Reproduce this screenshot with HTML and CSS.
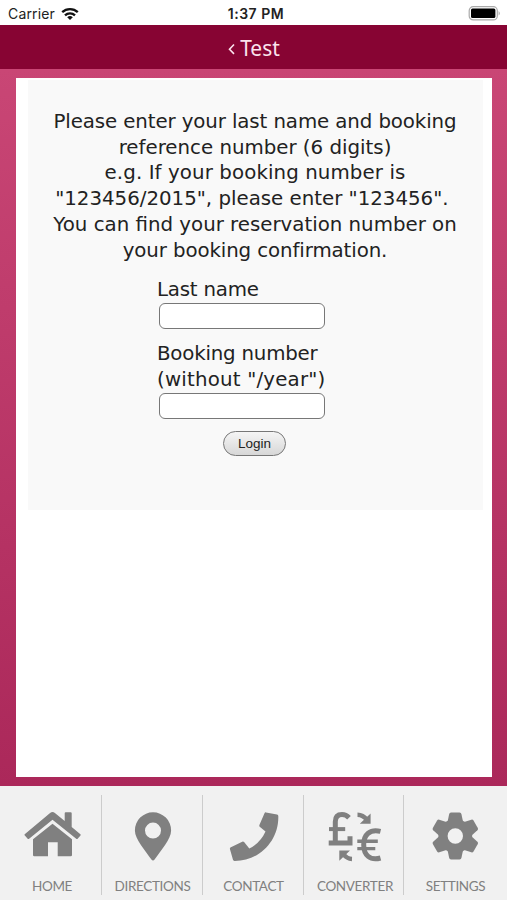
FILE: index.html
```html
<!DOCTYPE html>
<html lang="en">
<head>
<meta charset="utf-8">
<title>Test</title>
<link rel="stylesheet" href="styles.css">
</head>
<body>
<div class="status">
  <div class="carrier"><span>Carrier</span>
    <svg width="18" height="14" viewBox="0 0 18 14" fill="none" stroke="#111" stroke-width="2.3"><path d="M1.2 5.2a11.2 11.2 0 0 1 15.6 0M4 8.3a7.2 7.2 0 0 1 10 0"/><path d="M9 13L6.2 10.3a4 4 0 0 1 5.6 0z" fill="#111" stroke="none"/></svg>
  </div>
  <div class="time">1:37 PM</div>
  <svg class="battery" width="33" height="15" viewBox="0 0 33 15"><rect x="1.200" y=".7" width="28.100" height="13.2" rx="4" fill="#fff" stroke="#aaa" stroke-width="1.2"/><rect x="3" y="2.5" width="24.400" height="9.6" rx="1.500" fill="#000"/><path d="M30.7 5q2 2.3 0 4.6z" fill="#999"/></svg>
</div>
<header class="header">
  <svg width="8" height="12" viewBox="0 0 8 12" fill="none" stroke="#fbe3ed" stroke-width="1.6"><path d="M7 1.500L2.500 6.200l4.500 4.700"/></svg>
  <h1>Test</h1>
</header>
<main class="main">
  <div class="card">
    <form class="panel">
      <p class="intro"><span class="tight">Please enter your last name and booking</span><br>reference number (6 digits)<br><span class="loose">e.g. If your booking number is</span><br>"123456/2015", please enter "123456".&nbsp;<br>You can find your reservation number on<br><span class="tight">your booking confirmation.</span></p>
      <div class="fields">
        <label class="tighter" for="last">Last name</label>
        <input id="last" type="text">
        <label class="second" for="booking"><span class="tighter">Booking number</span><br><span class="wide">(without "/year")</span></label>
        <input id="booking" type="text">
      </div>
      <button type="button">Login</button>
    </form>
  </div>
</main>
<nav class="tabs">
  <a class="tab"><svg viewBox="22 806 60 60"><path d="M33 839.200L52.500 823.700 72 839.200V855q0 1.300-1.300 1.300H57.700V842.300H48V856.300H34.300Q33 856.300 33 855z"/><path d="M24.700 834.300L50.100 813q2.400-1.900 4.800 0L64.700 821V813.300q0-1 1-1h5q1 0 1 1V827L80.400 834.300q.6.500.1 1.100L77.400 839 76.500 839 52.500 819.700 28.800 839 27.900 839 24.600 835.300q-.4-.6.1-1z"/></svg><span>HOME</span></a>
  <a class="tab directions"><svg viewBox="123 806 60 60"><path fill-rule="evenodd" d="M153 812.300a18 18 0 0 1 18.100 18.100c0 9-10.600 20-16.500 29.200q-1.600 2-3.200 0c-5.900-9.200-16.500-20.200-16.500-29.200A18 18 0 0 1 153 812.300zm0 10.300a8 8 0 1 0 0 16 8 8 0 0 0 0-16z"/></svg><span>DIRECTIONS</span></a>
  <a class="tab contact"><svg viewBox="223 806 60 60"><path d="M264.500 813.200q.5-1 1.500-.8L277 814.500q1.300.3 1.300 1.600C279 840 260 861 234.500 860.900q-1.300 0-1.600-1.300L229.900 849q-.2-1.200 1-1.700l11.300-5.600q1.100-.5 1.900.4l5.200 6.500q11-5.500 16.200-17l-5.500-4.500q-1-.8-.6-2z"/></svg><span>CONTACT</span></a>
  <a class="tab converter"><svg viewBox="325 806 60 60"><g fill="none" stroke="#808080" stroke-width="5"><path d="M349 817.800q-3-3.200-7-3.200-6.700 0-6.700 7.200v20"/><path d="M329 829.100h16.200" stroke-width="4"/><path d="M328.700 843h21.300v-6.800"/><path d="M380.500 831.400c-10.500-2.500-16.800 3-16.800 13.300s6.300 16.300 16.800 13.300"/><path d="M357.300 841.200h20.500M357.300 848.600h18" stroke-width="3.400"/><path d="M357.500 814.700q5.500 0 9.700 5.500M352 859q-5-.2-9-5.100" stroke-width="4.400"/></g><path d="M370.600 813.500V823.800H359.800zM339.300 860.800V850.500H350z"/></svg><span>CONVERTER</span></a>
  <a class="tab settings"><svg viewBox="425 806 60 60"><defs><path id="tooth" d="M447.300 823L449.200 814q.3-1.400 1.800-1.500h8.600q1.500.1 1.800 1.500L463.300 823z"/></defs><use href="#tooth"/><use href="#tooth" transform="rotate(60 455.300 836)"/><use href="#tooth" transform="rotate(120 455.300 836)"/><use href="#tooth" transform="rotate(180 455.300 836)"/><use href="#tooth" transform="rotate(240 455.300 836)"/><use href="#tooth" transform="rotate(300 455.300 836)"/><circle cx="455.300" cy="836" r="12.300" fill="none" stroke="#808080" stroke-width="9.200"/></svg><span>SETTINGS</span></a>
</nav>
</body>
</html>
```
FILE: styles.css
```css
* { box-sizing: border-box; }
body {
  margin: 0;
  width: 507px;
  height: 900px;
  display: flex;
  flex-direction: column;
  overflow: hidden;
  background: #fff;
  font-family: "DejaVu Sans", Verdana, sans-serif;
}
.status {
  height: 25px;
  flex: none;
  display: grid;
  grid-template-columns: 1fr auto 1fr;
  align-items: center;
  padding: 2px 6px 0 8px;
  font: 14px/20px Inter, sans-serif;
  color: #222;
}
.carrier { display: flex; align-items: center; gap: 6px; letter-spacing: .15px; }
.time { font-weight: 600; letter-spacing: .5px; margin-left: 3px; }
.battery { justify-self: end; }
.header {
  height: 44px;
  flex: none;
  display: flex;
  justify-content: center;
  align-items: center;
  gap: 5px;
  padding-top: 1px;
  background: #870433;
  color: #fbe3ed;
}
.header svg { margin-top: 2px; }
.header h1 { margin: 0; font: 400 21px/28px "Noto Sans", sans-serif; }
.main {
  height: 717px;
  flex: none;
  padding: 9px 15px 9px 16px;
  background: linear-gradient(#c94675, #ab285a);
}
.card { height: 699px; background: #fff; padding: 2px 9px 0 12px; }
.panel {
  height: 430px;
  padding: 29px 1px 0 0;
  background: #f9f9f9;
  display: flex;
  flex-direction: column;
  align-items: center;
  color: #222;
  font-size: 19.8px;
  line-height: 25.7px;
}
.intro { margin: 0; text-align: center; white-space: nowrap; }
.tight { letter-spacing: -.1px; }
.tighter { letter-spacing: -.2px; }
.loose { letter-spacing: .1px; }
.wide { letter-spacing: .2px; }
.fields { width: 196px; margin: 13.5px 0 0; display: flex; flex-direction: column; white-space: nowrap; }
.fields input {
  width: 166px;
  height: 26px;
  margin: 1px 0 0 2px;
  padding: 0 6px;
  border: 1.5px solid #777;
  border-radius: 6px;
  background: #fff;
}
.fields .second { margin-top: 11.5px; }
.panel button {
  width: 63px;
  height: 25px;
  margin: 12px 1px 0 0;
  padding: 0;
  border: 1.5px solid #777;
  border-radius: 13px;
  background: linear-gradient(#f5f5f5, #d7d7d7);
  color: #222;
  font: 13.5px "Liberation Sans", sans-serif;
}
.tabs {
  height: 114px;
  flex: none;
  display: grid;
  grid-template-columns: 102px 101px 101px 100px 103px;
  padding: 9px 0 7px;
  background: #f1f1f1;
}
.tab {
  display: flex;
  flex-direction: column;
  align-items: center;
  padding-top: 11px;
  border-right: 1px solid #ccc;
  color: #808080;
  font: 13.5px/18px Lato, sans-serif;
  letter-spacing: -.35px;
}
.tab:last-child { border-right: 0; }
.tab svg { width: 60px; height: 60px; margin-left: 3px; fill: #808080; }
.tab span { margin: 11px 0 0 3px; }
.tab.directions svg { margin-left: 2px; }
.tab.contact svg { margin-left: 0; }
.tab.directions span, .tab.contact span { margin-left: 1px; }
.tab.converter svg, .tab.converter span { margin-left: 3px; }
.tab.settings svg { margin-left: -1px; }
.tab.settings span { margin-left: 0; }
```
